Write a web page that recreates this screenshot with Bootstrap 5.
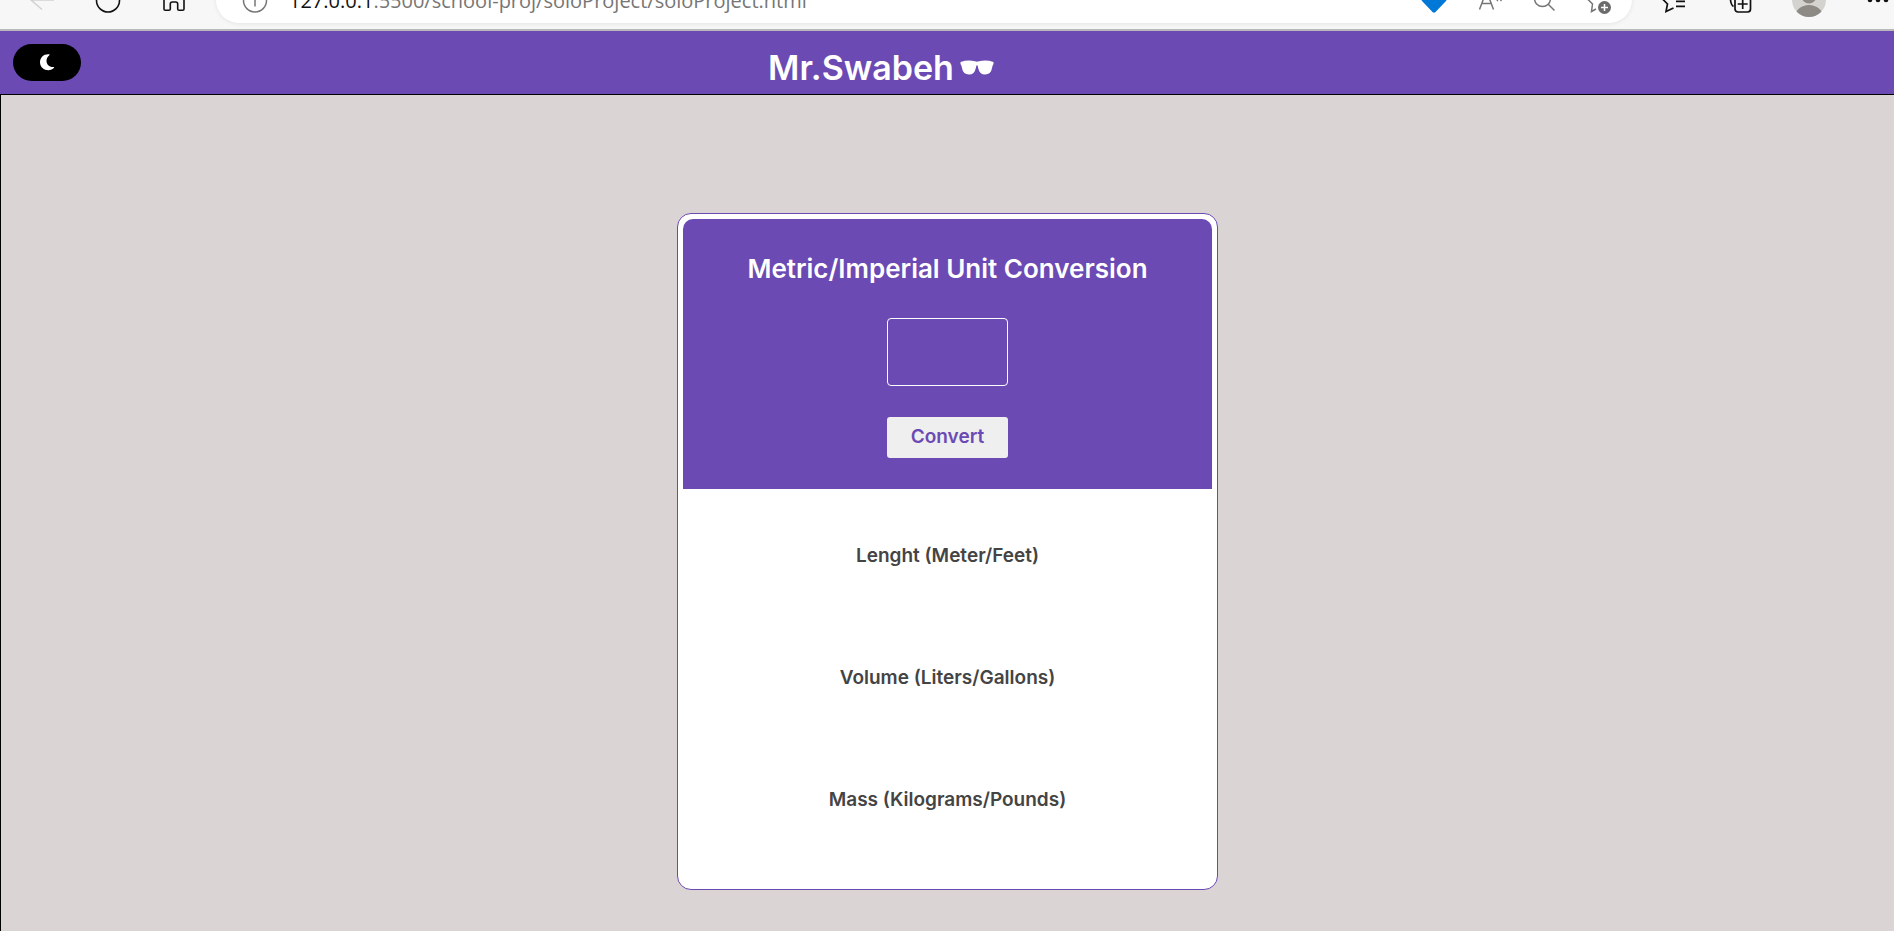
<!DOCTYPE html>
<html lang="en">
<head>
<meta charset="utf-8">
<meta name="viewport" content="width=device-width, initial-scale=1">
<title>Unit Conversion</title>
<link rel="stylesheet" href="https://cdn.jsdelivr.net/npm/bootstrap@5.3.0/dist/css/bootstrap.min.css">
<style>
  :root { --brand: #6c4ab4; }
  body { font-family: Inter, sans-serif; background: #dad4d4; }
  svg { display: block; flex-shrink: 0; }

  /* browser toolbar, scrolled half out of view */
  .toolbar { height: 31px; padding: 0 2px 6px 28px; background: #f7f7f7; border-bottom: 2px solid #b9b9bb; }
  .toolbar-row { height: 46px; }
  .tool-btn { padding: 0; border: 0; background: none; color: #111; }
  .tool-gap { gap: 38px; }
  .address { height: 46px; margin: 0 28px; padding: 0 19px 0 25px; border-radius: 23px; background: #fff; box-shadow: 0 1px 4px #00000014; color: #767676; }
  .address .tool-btn { color: #767676; }
  .address-tools { gap: 27px; }
  .url { margin-left: 20px; padding-top: 2px; font: 20px/28px "Open Sans", sans-serif; }
  .url-host { color: #111; }

  .site-header { height: 63px; padding: 0 13px; background: var(--brand); }
  .theme-btn { width: 68px; height: 37px; margin-bottom: 1px; border: 0; border-radius: 19px; background: #000; color: #fff; }
  .site-title { font-size: 34px; line-height: 40px; padding-top: 10px; gap: 6px; }
  .header-end { width: 200px; }

  .page-main { padding: 118px 0 40px; border: solid #000; border-width: 1px 0 0 1px; }
  .converter { width: 541px; max-width: 100%; padding: 5px; border: 1px solid var(--brand); border-radius: 14px; background: #fff; }
  .converter-top { height: 270px; padding-top: 34px; border-radius: 10px 10px 0 0; background: var(--brand); }
  .converter-title { font-size: 26px; line-height: 32px; margin-bottom: 33px; }
  .amount { width: 121px; height: 68px; margin-bottom: 31px; border: 1px solid #fff; border-radius: 4px; background: transparent; color: #fff; font-size: 32px; text-align: center; }
  .convert-btn { width: 121px; height: 41px; border: 0; border-radius: 3px; background: #efefef; color: var(--brand); font-size: 19px; }
  .results { padding: 6px 0 23px; }
  .result { height: 122px; color: #444; font-size: 19px; line-height: 24px; margin: 0; }
</style>
</head>
<body class="d-flex flex-column min-vh-100">

<div class="toolbar d-flex align-items-end overflow-hidden">
  <div class="toolbar-row d-flex align-items-center w-100">
    <div class="d-flex align-items-center tool-gap">
      <button class="tool-btn" aria-label="Back" disabled>
        <svg width="28" height="28" viewBox="-14 -14 28 28" fill="none" stroke="#d2d2d2" stroke-width="1.5"><path d="M12 0H-11M0-10-11 0 0 9.500"/></svg>
      </button>
      <button class="tool-btn" aria-label="Refresh">
        <svg width="28" height="28" viewBox="-14 -14 28 28" fill="none" stroke="currentColor" stroke-width="1.600"><circle r="11.500" cy=".5"/></svg>
      </button>
      <button class="tool-btn" aria-label="Home">
        <svg width="28" height="28" viewBox="-14 -14 28 28" fill="none" stroke="currentColor" stroke-width="1.600"><path d="M-10-3 0-12 10-3V9Q10 10.300 8.700 10.300H5Q3.700 10.300 3.700 9V4Q3.700 2 1.700 2H-1.700Q-3.700 2-3.700 4V9Q-3.700 10.300-5 10.300H-8.700Q-10 10.300-10 9Z"/></svg>
      </button>
    </div>
    <div class="address flex-grow-1 d-flex align-items-center">
      <button class="tool-btn" aria-label="Site information">
        <svg width="28" height="28" viewBox="-14 -14 28 28" fill="none" stroke="currentColor" stroke-width="1.500"><circle r="11.500" cy=".5"/><path d="M0-2V6.500"/></svg>
      </button>
      <div class="url text-nowrap"><span class="url-host">127.0.0.1</span>:5500/school-proj/soloProject/soloProject.html</div>
      <div class="address-tools d-flex align-items-center ms-auto">
        <button class="tool-btn" aria-label="Shopping">
          <svg width="28" height="28" viewBox="-14 -14 28 28" fill="#0078d7"><path d="M-12-1.500Q-13 0-12 1L-1.500 12Q0 13.300 1.500 12L12 1Q13 0 12-1.500L4-12H-4Z"/></svg>
        </button>
        <button class="tool-btn" aria-label="Read aloud">
          <svg width="28" height="28" viewBox="-14 -14 28 28" fill="none" stroke="currentColor" stroke-width="1.500"><path d="M-9.500 9.500-2.500-9 4.500 9.500M-7.500 3.500H2.500M8-3Q9.500-1 8 1M11-5Q14-2 11.500 1"/></svg>
        </button>
        <button class="tool-btn" aria-label="Zoom">
          <svg width="28" height="28" viewBox="-14 -14 28 28" fill="none" stroke="currentColor" stroke-width="1.500"><circle cx="-1.500" cy="-1.500" r="8"/><path d="M4 4 10.500 10.500"/></svg>
        </button>
        <button class="tool-btn" aria-label="Add to favorites">
          <svg width="28" height="28" viewBox="-14 -14 28 28" fill="none" stroke="currentColor" stroke-width="1.500"><path d="M-3 9-7.500 11.500-6.500 4-12-1.500-5-3-1-10 3-3 10-2"/><circle cx="5.500" cy="7.500" r="6.500" fill="#6b6b6b" stroke="none"/><path d="M5.500 4V11M2 7.500H9" stroke="#fff"/></svg>
        </button>
      </div>
    </div>
    <div class="d-flex align-items-center tool-gap">
      <button class="tool-btn" aria-label="Favorites">
        <svg width="28" height="28" viewBox="-14 -14 28 28" fill="none" stroke="currentColor" stroke-width="1.700"><path d="M-.5 8-8 11.500-6.500 4-12-1.500-5-3-1-10 2-4M2 1.300H11M2 6.300H11"/></svg>
      </button>
      <button class="tool-btn" aria-label="Collections">
        <svg width="28" height="28" viewBox="-14 -14 28 28" fill="none" stroke="currentColor" stroke-width="1.700"><rect x="-5" y="-4" width="15.500" height="16" rx="3"/><path d="M2.700-1V9M-2.300 4H7.700M-6.500 6.500Q-9 5-9.500 0L-10-6"/></svg>
      </button>
      <button class="tool-btn" aria-label="Profile">
        <svg width="34" height="34" viewBox="-17 -17 34 34"><defs><clipPath id="face"><circle r="17"/></clipPath></defs><circle r="17" fill="#d5d3cf"/><g fill="#8d8985" clip-path="url(#face)"><circle cy="-4" r="7.500"/><ellipse cy="17" rx="14" ry="12"/></g></svg>
      </button>
      <button class="tool-btn" aria-label="Menu">
        <svg width="28" height="28" viewBox="-14 -14 28 28" fill="currentColor"><circle cx="-8" r="2.300"/><circle r="2.300"/><circle cx="8" r="2.300"/></svg>
      </button>
    </div>
  </div>
</div>

<header class="site-header d-flex align-items-center justify-content-between">
  <button class="theme-btn d-flex align-items-center justify-content-center" aria-label="Dark mode">
    <svg width="16" height="18" viewBox="0 0 16 18" fill="currentColor"><path d="M10 1.300C5 .8 1 4.500 1 9.300S5 17.300 9.300 17.300C11.600 17.300 13.800 16.300 15 14.800 15.300 14.300 15 13.900 14.500 14 10.800 14.500 7.500 11.600 7.500 8 7.500 5.500 8.500 3.700 10.300 2.300 10.800 1.900 10.600 1.300 10 1.300Z"/></svg>
  </button>
  <h1 class="site-title d-flex align-items-center fw-semibold text-white m-0">Mr.Swabeh
    <svg width="34" height="16" viewBox="0 0 34 16" fill="currentColor"><path d="M.5 2Q8-.5 15 1.300L17 1.800 19 1.300Q26-.5 33.500 2V4Q32.500 5 32 8 31 14.500 25 14.500 19.500 14.500 18.300 8.500 17.800 5 17 5T15.700 8.500Q14.500 14.500 9 14.500 3 14.500 2 8 1.500 5 .5 4Z"/></svg>
  </h1>
  <div class="header-end"></div>
</header>

<main class="page-main flex-grow-1">
  <div class="converter mx-auto">
    <form class="converter-top d-flex flex-column align-items-center">
      <h2 class="converter-title fw-semibold text-white text-center">Metric/Imperial Unit Conversion</h2>
      <input class="amount" type="text" inputmode="decimal" aria-label="Value to convert">
      <button class="convert-btn fw-semibold" type="button">Convert</button>
    </form>
    <div class="results">
      <h3 class="result d-flex align-items-center justify-content-center fw-semibold">Lenght (Meter/Feet)</h3>
      <h3 class="result d-flex align-items-center justify-content-center fw-semibold">Volume (Liters/Gallons)</h3>
      <h3 class="result d-flex align-items-center justify-content-center fw-semibold">Mass (Kilograms/Pounds)</h3>
    </div>
  </div>
</main>

<script src="https://cdn.jsdelivr.net/npm/bootstrap@5.3.0/dist/js/bootstrap.bundle.min.js"></script>
</body>
</html>
